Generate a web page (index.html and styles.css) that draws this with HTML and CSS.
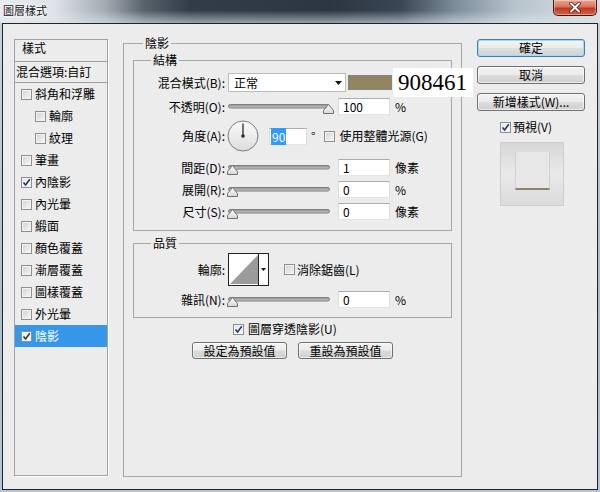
FILE: index.html
```html
<!DOCTYPE html>
<html lang="zh-Hant">
<head>
<meta charset="utf-8">
<title>圖層樣式</title>
<link rel="stylesheet" href="styles.css">
</head>
<body>
<div class="window">
  <div class="titlebar">
    <span class="title">圖層樣式</span>
    <div class="close">
      <svg width="14" height="11" viewBox="0 0 14 11"><path d="M3 1.5 L11 9.5 M11 1.5 L3 9.5" stroke="#5a150c" stroke-width="3.6" stroke-linecap="round"/><path d="M3 1.5 L11 9.5 M11 1.5 L3 9.5" stroke="#fff" stroke-width="2" stroke-linecap="round"/></svg>
    </div>
  </div>
  <div class="dialog">
    <div class="styles-panel">
      <div class="sp-head">樣式</div>
      <div class="sp-blend">混合選項:自訂</div>
      <ul class="sp-list">
        <li class="sp-item"><span class="cb"></span>斜角和浮雕</li>
        <li class="sp-item sub"><span class="cb"></span>輪廓</li>
        <li class="sp-item sub"><span class="cb"></span>紋理</li>
        <li class="sp-item"><span class="cb"></span>筆畫</li>
        <li class="sp-item"><span class="cb on"><svg width="9" height="9" viewBox="0 0 9 9"><path d="M1.5 4.5 L3.6 7 L7.8 1.3" fill="none" stroke="#1e3a66" stroke-width="1.6"/></svg></span>內陰影</li>
        <li class="sp-item"><span class="cb"></span>內光暈</li>
        <li class="sp-item"><span class="cb"></span>緞面</li>
        <li class="sp-item"><span class="cb"></span>顏色覆蓋</li>
        <li class="sp-item"><span class="cb"></span>漸層覆蓋</li>
        <li class="sp-item"><span class="cb"></span>圖樣覆蓋</li>
        <li class="sp-item"><span class="cb"></span>外光暈</li>
        <li class="sp-item sel"><span class="cb on"><svg width="9" height="9" viewBox="0 0 9 9"><path d="M1.5 4.5 L3.6 7 L7.8 1.3" fill="none" stroke="#1e3a66" stroke-width="1.6"/></svg></span>陰影</li>
      </ul>
    </div>

    <fieldset class="group main-group">
      <legend>陰影</legend>
      <fieldset class="group sub-group struct">
        <legend>結構</legend>
        <div class="row">
          <span class="lbl">混合模式(B):</span>
          <div class="select"><span>正常</span><svg width="7" height="4" viewBox="0 0 7 4"><path d="M0 0 H7 L3.5 4 Z" fill="#111"/></svg></div>
          <span class="swatch"></span>
        </div>
        <div class="row r-op">
          <span class="lbl">不透明(O):</span>
          <svg class="slider" width="102" height="11" viewBox="0 0 102 11"><defs><linearGradient id="tk1" x1="0" y1="0" x2="0" y2="1"><stop offset="0" stop-color="#8a8a8a"/><stop offset="1" stop-color="#d0d0d0"/></linearGradient><linearGradient id="th1" x1="0" y1="0" x2="0" y2="1"><stop offset="0" stop-color="#ffffff"/><stop offset="1" stop-color="#d6d6d6"/></linearGradient></defs><rect x="0.5" y="0.5" width="101" height="3.5" rx="1.75" fill="url(#tk1)" stroke="#7d7d7d"/><polygon transform="translate(95 0)" points="5.5,0.5 10.5,6.5 10.5,9.5 0.5,9.5 0.5,6.5" fill="url(#th1)" stroke="#6f6f6f"/></svg>
          <span class="field">100</span>
          <span class="unit">%</span>
        </div>
        <div class="row r-ang">
          <span class="lbl">角度(A):</span>
          <svg class="dial" width="32" height="32" viewBox="0 0 32 32"><defs><linearGradient id="dg" x1="0" y1="0" x2="0" y2="1"><stop offset="0" stop-color="#fbfbfb"/><stop offset="1" stop-color="#dcdcdc"/></linearGradient></defs><circle cx="16" cy="16" r="15" fill="url(#dg)" stroke="#7c7c7c"/><path d="M16 16 V3.5" stroke="#2a2a2a" stroke-width="1.3"/><circle cx="16" cy="16" r="1.8" fill="#2a2a2a"/></svg>
          <span class="field angle"><span class="hl">90</span></span>
          <span class="deg">°</span>
          <span class="cb gap"></span>
          <span class="cb-text">使用整體光源(G)</span>
        </div>
        <div class="row r-dist">
          <span class="lbl">間距(D):</span>
          <svg class="slider" width="102" height="11" viewBox="0 0 102 11"><rect x="0.5" y="0.5" width="101" height="3.5" rx="1.75" fill="url(#tk1)" stroke="#7d7d7d"/><polygon transform="translate(-1 0)" points="5.5,0.5 10.5,6.5 10.5,9.5 0.5,9.5 0.5,6.5" fill="url(#th1)" stroke="#6f6f6f"/></svg>
          <span class="field">1</span>
          <span class="unit">像素</span>
        </div>
        <div class="row r-next">
          <span class="lbl">展開(R):</span>
          <svg class="slider" width="102" height="11" viewBox="0 0 102 11"><rect x="0.5" y="0.5" width="101" height="3.5" rx="1.75" fill="url(#tk1)" stroke="#7d7d7d"/><polygon transform="translate(-1 0)" points="5.5,0.5 10.5,6.5 10.5,9.5 0.5,9.5 0.5,6.5" fill="url(#th1)" stroke="#6f6f6f"/></svg>
          <span class="field">0</span>
          <span class="unit">%</span>
        </div>
        <div class="row r-next">
          <span class="lbl">尺寸(S):</span>
          <svg class="slider" width="102" height="11" viewBox="0 0 102 11"><rect x="0.5" y="0.5" width="101" height="3.5" rx="1.75" fill="url(#tk1)" stroke="#7d7d7d"/><polygon transform="translate(-1 0)" points="5.5,0.5 10.5,6.5 10.5,9.5 0.5,9.5 0.5,6.5" fill="url(#th1)" stroke="#6f6f6f"/></svg>
          <span class="field">0</span>
          <span class="unit">像素</span>
        </div>
      </fieldset>

      <fieldset class="group sub-group quality">
        <legend>品質</legend>
        <div class="row r-contour">
          <span class="lbl">輪廓:</span>
          <svg class="contour" width="41" height="33" viewBox="0 0 41 33"><rect x="0.5" y="0.5" width="40" height="32" fill="#fff" stroke="#222"/><polygon points="2,31 30,2 30,31" fill="#9b9b9b"/><path d="M30.5 0.5 V32.5" stroke="#222"/><path d="M33 15 H38 L35.5 18 Z" fill="#111"/></svg>
          <span class="cb aa"></span>
          <span class="cb-text tight">消除鋸齒(L)</span>
        </div>
        <div class="row r-noise">
          <span class="lbl">雜訊(N):</span>
          <svg class="slider" width="102" height="11" viewBox="0 0 102 11"><rect x="0.5" y="0.5" width="101" height="3.5" rx="1.75" fill="url(#tk1)" stroke="#7d7d7d"/><polygon transform="translate(-1 0)" points="5.5,0.5 10.5,6.5 10.5,9.5 0.5,9.5 0.5,6.5" fill="url(#th1)" stroke="#6f6f6f"/></svg>
          <span class="field">0</span>
          <span class="unit">%</span>
        </div>
      </fieldset>

      <div class="knock"><span class="cb on"><svg width="9" height="9" viewBox="0 0 9 9"><path d="M1.5 4.5 L3.6 7 L7.8 1.3" fill="none" stroke="#1e3a66" stroke-width="1.6"/></svg></span>圖層穿透陰影(U)</div>
      <div class="defaults">
        <button class="btn small">設定為預設值</button>
        <button class="btn small">重設為預設值</button>
      </div>
    </fieldset>

    <div class="side">
      <button class="btn default">確定</button>
      <button class="btn">取消</button>
      <button class="btn">新增樣式(W)...</button>
      <div class="preview-toggle"><span class="cb on"><svg width="9" height="9" viewBox="0 0 9 9"><path d="M1.5 4.5 L3.6 7 L7.8 1.3" fill="none" stroke="#1e3a66" stroke-width="1.6"/></svg></span>預視(V)</div>
      <div class="preview"><div class="preview-shape"></div></div>
    </div>
  </div>
  <div class="hex">908461</div>
</div>
</body>
</html>
```

FILE: styles.css
```css
* { box-sizing: border-box; }
html, body { margin: 0; padding: 0; }
body {
  width: 600px;
  height: 492px;
  overflow: hidden;
  font-family: "Noto Sans CJK TC", "Noto Sans CJK SC", "Liberation Sans", sans-serif;
  font-size: 12px;
  line-height: 14px;
  color: #000;
  background: #b9c5ce;
}
.window {
  position: relative;
  width: 600px;
  height: 492px;
  background: linear-gradient(to bottom, #c9d3da 0%, #aebcc6 60%, #b4c6d2 100%);
}
.titlebar {
  height: 23px;
  display: flex;
  justify-content: space-between;
  align-items: flex-start;
  background:
    linear-gradient(to bottom, rgba(255,255,255,0) 0%, rgba(255,255,255,0) 45%, rgba(222,230,236,0.6) 100%),
    linear-gradient(to right, #e8ecef 0px, #dde2e6 55px, #a3acb4 105px, #56616b 145px, #323d48 190px, #2b3641 330px, #394654 400px, #7c8c99 455px, #b7c4cd 515px, #d6dee4 600px);
}
.title {
  margin: 4px 0 0 3px;
  font-size: 11px;
  line-height: 13px;
  color: #111;
  text-shadow: 0 0 3px #fff, 0 0 6px #fff, 0 0 2px #fff;
}
.close {
  width: 44px;
  height: 16px;
  margin-right: 3px;
  border: 1px solid #4f140c;
  border-top: none;
  border-radius: 0 0 5px 5px;
  background: linear-gradient(#eaa797 0%, #d8735e 45%, #c03a20 55%, #d2634c 100%);
  box-shadow: inset 0 0 0 1px rgba(255,255,255,0.35);
  display: flex;
  align-items: center;
  justify-content: center;
}
.close svg { display: block; }

.dialog {
  margin: 0 2px;
  width: 596px;
  height: 467px;
  border: 1px solid #1c252d;
  background: #ececec;
  display: flex;
  align-items: flex-start;
  padding: 12px 0 0 11px;
}

/* left styles panel */
.styles-panel {
  flex: none;
  width: 94px;
  height: 437px;
  margin: 3px 15px 0 0;
  border: 1px solid #a0a0a0;
  box-shadow: 1px 1px 0 #fff;
}
.sp-head {
  height: 22px;
  padding: 1px 0 0 7px;
  border-bottom: 1px solid #a0a0a0;
}
.sp-blend {
  height: 21px;
  line-height: 20px;
  padding-left: 1px;
  border-bottom: 1px solid #a0a0a0;
}
.sp-list { list-style: none; margin: 0; padding: 0; }
.sp-item {
  height: 22px;
  display: flex;
  align-items: center;
  gap: 3px;
  padding-left: 6px;
}
.sp-item.sub { padding-left: 20px; }
.sp-item.sel { background: #3697ea; color: #fff; }

.cb {
  flex: none;
  width: 11px;
  height: 11px;
  border: 1px solid #8e8e8e;
  background: linear-gradient(135deg, #cfd1d3, #f7f7f7);
  box-shadow: inset 0 0 0 1px #f3f3f3;
  display: inline-flex;
}
.cb svg { display: block; }
.cb.on { background: linear-gradient(135deg, #e4e6e8, #fbfbfb); }

/* group boxes */
fieldset.group {
  margin: 0;
  border: 1px solid #a6a6a6;
  min-width: 0;
}
fieldset.group > legend {
  padding: 0 2px;
  line-height: 14px;
  font-size: 12px;
}
fieldset.main-group {
  flex: none;
  width: 339px;
  height: 441px;
  padding: 3px 9px 0;
  margin: 0 15px 0 0;
}
fieldset.main-group > legend { margin-left: 10px; }
fieldset.sub-group > legend { margin-left: 17px; }
fieldset.struct { padding: 6px 0 9px; }
fieldset.quality { padding: 3px 0 8px; margin-top: 5px; }

.row {
  display: flex;
  align-items: center;
  height: 19px;
}
.lbl {
  flex: none;
  width: 91px;
  margin-right: 3px;
  text-align: right;
  white-space: nowrap;
}
.r-op { margin-top: 5px; }
.r-ang { margin-top: 4px; height: 32px; }
.r-dist { margin-top: 6px; }
.r-next { margin-top: 3px; }
.r-contour { height: 33px; }
.r-noise { margin-top: 4px; }

.select {
  flex: none;
  width: 118px;
  height: 19px;
  border: 1px solid #bcbcbc;
  background: #fff;
  display: flex;
  align-items: center;
  justify-content: space-between;
  padding: 0 3px 0 5px;
}
.select svg { display: block; }
.swatch {
  flex: none;
  width: 44px;
  height: 15px;
  margin-left: 2px;
  background: #908461;
  border: 1px solid #858585;
}
.slider { flex: none; display: block; overflow: visible; margin-top: 5px; }
.field {
  flex: none;
  width: 52px;
  height: 17px;
  margin-left: 8px;
  border: 1px solid;
  border-color: #a9adb3 #d9dce1 #e2e5ea #d9dce1;
  background: #fff;
  padding-left: 4px;
  line-height: 15px;
}
.unit { margin-left: 5px; }
.dial { flex: none; display: block; margin-left: -1px; }
.field.angle { width: 38px; margin-left: 10px; padding-left: 1px; }
.hl { background: #3399ff; color: #fff; padding: 0 1px; }
.deg { margin-left: 4px; }
.cb.gap { margin-left: 9px; }
.cb-text { margin-left: 4px; }
.cb-text.tight { margin-left: 2px; }
.contour { flex: none; display: block; }
.cb.aa { margin-left: 15px; }

.knock {
  display: flex;
  align-items: center;
  gap: 4px;
  height: 16px;
  margin-top: 3px;
  padding-left: 100px;
}
.defaults {
  display: flex;
  justify-content: center;
  gap: 11px;
  margin-top: 5px;
}

.btn {
  display: block;
  margin: 0;
  padding: 0;
  font: inherit;
  font-size: 12px;
  line-height: 16px;
  color: #000;
  height: 18px;
  width: 108px;
  text-align: center;
  border: 1px solid #707070;
  border-radius: 3px;
  background: linear-gradient(#f3f3f3 0%, #ebebeb 48%, #dcdcdc 52%, #cfcfcf 100%);
  box-shadow: inset 0 0 0 1px rgba(255,255,255,0.6);
}
.btn.small { width: 95px; height: 17px; line-height: 15px; }
.btn.default {
  border-color: #3c7fb1;
  box-shadow: inset 0 0 0 1px #9fdcf3;
  background: linear-gradient(#f3f5f6 0%, #eaeced 48%, #dcdee0 52%, #d0d3d5 100%);
}

.side {
  flex: none;
  width: 108px;
  margin-top: 3px;
  display: flex;
  flex-direction: column;
}
.side .btn + .btn { margin-top: 9px; }
.preview-toggle {
  display: flex;
  align-items: center;
  gap: 2px;
  height: 14px;
  margin: 9px 0 0 23px;
}
.preview {
  width: 64px;
  height: 64px;
  margin: 8px 0 0 23px;
  border: 1px solid #cdcdcd;
  background: linear-gradient(#d7d7d7, #e9e9e9 50%, #dadada);
  padding: 9px 0 0 14px;
}
.preview-shape {
  width: 35px;
  height: 38px;
  background: #e7e7e7;
  border-left: 1px solid #d2d2d2;
  border-right: 1px solid #d2d2d2;
  border-bottom: 2px solid #8f8564;
}

.hex {
  position: absolute;
  left: 393px;
  top: 68px;
  width: 80px;
  height: 29px;
  padding-left: 5px;
  background: #fff;
  font-family: "Liberation Serif", serif;
  font-size: 23px;
  line-height: 29px;
  color: #000;
}
```
